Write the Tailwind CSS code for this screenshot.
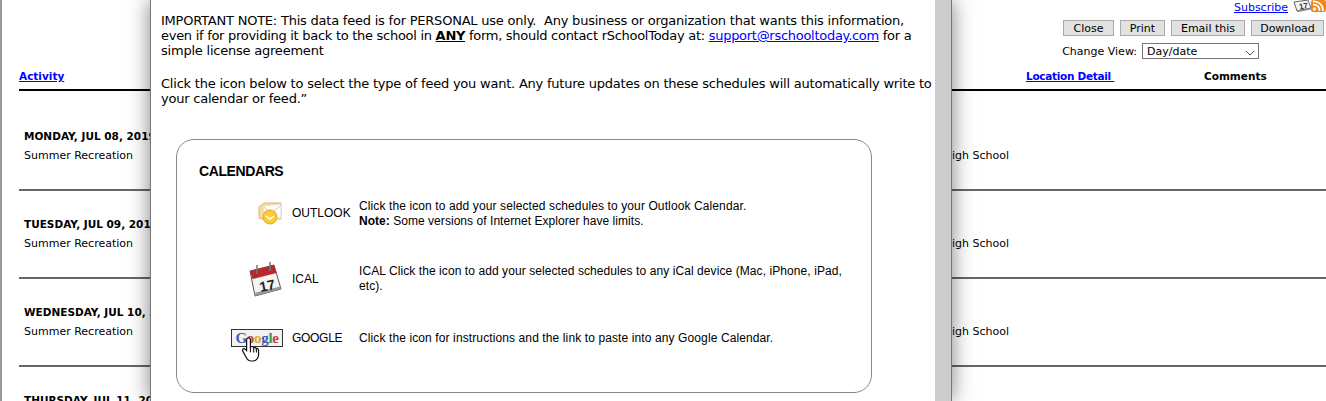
<!DOCTYPE html>
<html lang="en">
<head>
  <meta charset="UTF-8"/>
  <title>Schedule</title>
  <script src="https://cdn.jsdelivr.net/npm/@tailwindcss/browser@4"></script>
</head>
<body class="relative h-[401px] overflow-hidden bg-white font-['DejaVu_Sans',sans-serif] text-[11px] text-black">

  <!-- Page behind the popup -->
  <div class="h-[401px] border-l-2 border-[#999] pl-[17px]">
    <!-- Top right tools -->
    <div class="h-[20px] flex justify-end items-start">
      <a href="#" class="mt-[1px] text-[11px] leading-[14px] text-[#00f] underline">Subscribe</a>
      <svg class="ml-[5px]" width="19" height="12" viewBox="0 0 19 12">
        <path d="M1 2l14-2 3 8-14 3z" fill="#f2f2f2" stroke="#666"/>
        <path d="M4 11l14-3v1.500L5 12z" fill="#888"/>
        <text x="6" y="9" font-size="8" font-weight="700" fill="#333" font-family="Liberation Sans" transform="rotate(-8 9 6)">17</text>
      </svg>
      <svg class="ml-[-1px]" width="15" height="12" viewBox="0 0 15 12">
        <rect width="15" height="12" rx="2" fill="#f0851e"/>
        <circle cx="3.500" cy="9" r="1.700" fill="#fff"/>
        <path d="M2 4.800a5.500 5.500 0 0 1 6.500 6M2 1.500a9 9 0 0 1 10 9.500" fill="none" stroke="#fff" stroke-width="1.800"/>
      </svg>
    </div>
    <div class="flex justify-end gap-[6px] pr-[2px]">
      <button class="w-[51px] h-[16px] pt-[1px] bg-[#e1e1e1] border border-[#aaa] text-[11px] leading-[14px]">Close</button>
      <button class="w-[45px] h-[16px] pt-[1px] bg-[#e1e1e1] border border-[#aaa] text-[11px] leading-[14px]">Print</button>
      <button class="w-[74px] h-[16px] pt-[1px] bg-[#e1e1e1] border border-[#aaa] text-[11px] leading-[14px]">Email this</button>
      <button class="w-[73px] h-[16px] pt-[1px] bg-[#e1e1e1] border border-[#aaa] text-[11px] leading-[14px]">Download</button>
    </div>
    <div class="flex justify-end items-center mt-[7px] pr-[67px] h-[16px]">
      <span class="mr-[5px] pt-[2px] text-[11px]">Change View:</span>
      <div class="w-[117px] h-[16px] border border-[#777] flex items-center justify-between pl-[4px] pr-[3px] pt-[2px] text-[11px]">
        <span>Day/date</span>
        <svg width="10" height="6" viewBox="0 0 10 6" class="mt-[2px]"><path d="M1 1l4 4 4-4" fill="none" stroke="#555"/></svg>
      </div>
    </div>

    <!-- Table head -->
    <div class="flex h-[32px] pt-[10px] border-b-2 border-black font-bold text-[10.5px] leading-[14px]">
      <a href="#" class="w-[1007px] text-[#00f] underline">Activity</a>
      <a href="#" class="w-[178px] text-[#00f] underline tracking-[-0.3px]">Location Detail&nbsp;</a>
      <span>Comments</span>
    </div>

    <!-- Table rows -->
    <div class="h-[100px] border-b-2 border-[#666] pl-[5px] pt-[38px]">
      <div class="font-bold text-[10.5px] leading-[14px]">MONDAY, JUL 08, 2019</div>
      <div class="flex justify-between w-[985px] mt-[6px] leading-[14px]"><span>Summer Recreation</span><span>High School</span></div>
    </div>
    <div class="h-[88px] border-b-2 border-[#666] pl-[5px] pt-[26px]">
      <div class="font-bold text-[10.5px] leading-[14px]">TUESDAY, JUL 09, 2019</div>
      <div class="flex justify-between w-[985px] mt-[6px] leading-[14px]"><span>Summer Recreation</span><span>High School</span></div>
    </div>
    <div class="h-[88px] border-b-2 border-[#666] pl-[5px] pt-[26px]">
      <div class="font-bold text-[10.5px] leading-[14px]">WEDNESDAY, JUL 10, 2019</div>
      <div class="flex justify-between w-[985px] mt-[6px] leading-[14px]"><span>Summer Recreation</span><span>High School</span></div>
    </div>
    <div class="pl-[5px] pt-[26px] font-bold text-[10.5px] leading-[14px]">THURSDAY, JUL 11, 2019</div>
  </div>

  <!-- Popup -->
  <div class="absolute left-[150px] top-0 h-[401px] w-[802px] flex border-x border-[#777] bg-white shadow-[0_0_20px_rgba(0,0,0,0.5)]">
    <div class="w-[784px] shrink-0 pl-[10px] pt-[13px]">
      <p class="text-[13px] leading-[15px] tracking-[-0.22px] whitespace-nowrap">IMPORTANT NOTE: This data feed is for PERSONAL use only.&nbsp; Any business or organization that wants this information,<br/><span class="tracking-[-0.28px]">even if for providing it back to the school in <b class="underline">ANY</b> form, should contact rSchoolToday at: <a href="#" class="text-[#00f] underline">support@rschooltoday.com</a> for a</span><br/>simple license agreement</p>
      <p class="mt-[18px] text-[13px] leading-[15px] tracking-[-0.22px] whitespace-nowrap">Click the icon below to select the type of feed you want. Any future updates on these schedules will automatically write to<br/>your calendar or feed.”</p>

      <!-- Calendars box -->
      <div class="mt-[33px] ml-[15px] w-[696px] h-[254px] rounded-[18px] border border-[#888] pl-[22px] pt-[23px] font-['Liberation_Sans',sans-serif] text-[12px] leading-[15px]">
        <h2 class="text-[14px] leading-[16px] font-bold tracking-[-0.4px]">CALENDARS</h2>
        <div class="flex items-center mt-[20px] h-[30px]">
          <div class="w-[93px] pr-[10px] flex justify-end">
            <svg width="24" height="24" viewBox="0 0 24 24">
              <path d="M1 5l5-4h17v16H3l-2-1z" fill="#f8dc9c" stroke="#e8b654"/>
              <path d="M5 4l18-2v14H7z" fill="#fff" stroke="#ddd"/>
              <path d="M6 5l7 7 10-9" fill="none" stroke="#d9c58f"/>
              <circle cx="12" cy="15" r="7" fill="#f9cd35" stroke="#e4a61a"/>
              <path d="M8 14l4 3 4-3" fill="none" stroke="#fff" stroke-width="1.500"/>
            </svg>
          </div>
          <div class="w-[67px] -mt-[2px]">OUTLOOK</div>
          <div class="tracking-[0.11px]">Click the icon to add your selected schedules to your Outlook Calendar.<br/><b class="tracking-normal">Note:</b> <span class="tracking-[0.05px]">Some versions of Internet Explorer have limits.</span></div>
        </div>
        <div class="flex items-center mt-[35px] h-[30px]">
          <div class="w-[93px] pr-[10px] flex justify-end">
            <svg width="33" height="35" viewBox="0 0 33 35">
              <path d="M1 9l24-6 7 24-26 7z" fill="#f4f4f4" stroke="#555"/>
              <path d="M6 34l26-7-.8-2.500L5 31z" fill="#999"/>
              <path d="M1 9l24-6 2.500 8-24 6z" fill="#b5292c"/>
              <path d="M8 3v9M21 0v9" stroke="#777" stroke-width="1.500"/>
              <text x="10" y="29" font-size="14" font-weight="700" fill="#222" font-family="Liberation Sans" transform="rotate(-12 16 22)">17</text>
            </svg>
          </div>
          <div class="w-[67px]">ICAL</div>
          <div class="w-[490px] tracking-[0.08px]">ICAL Click the icon to add your selected schedules to any iCal device (Mac, iPhone, iPad, etc).</div>
        </div>
        <div class="flex items-center mt-[37px] h-[15px]">
          <div class="w-[93px] pr-[9px] flex justify-end">
            <div class="relative -mt-[1px] w-[52px] h-[18px] border border-[#333] bg-[#f2f2f2] flex items-center justify-center font-['Liberation_Serif',serif] font-bold text-[15px] leading-[15px] tracking-[-0.3px]">
              <span><span class="text-[#3b5bb5]">G</span><span class="text-[#c8402f]">o</span><span class="text-[#d9a72a]">o</span><span class="text-[#3b5bb5]">g</span><span class="text-[#3f9a3f]">l</span><span class="text-[#c8402f]">e</span></span>
              <svg class="absolute left-[9px] top-[7px]" width="21" height="25" viewBox="0 0 19 23">
                <path d="M6 1c1.200-.6 2.500 .2 2.500 1.500V9l1-.2c1-.2 1.800.2 2 1 1-.5 2-.1 2.200.8 1-.3 2.300.3 2.300 1.500v4c0 3-2 6-5 6H9c-2.500 0-3.500-1.500-4.500-3.500L1.500 13c-.8-1.500.8-3 2.200-1.800L5 12.500V2.500c0-.6.400-1.200 1-1.500z" fill="#fff" stroke="#111" stroke-width="1.100"/>
                <path d="M8.500 9v5M11.500 9.800v4.500M14 10.800v3.500" stroke="#111" fill="none"/>
              </svg>
            </div>
          </div>
          <div class="w-[67px] tracking-[-0.3px]">GOOGLE</div>
          <div class="tracking-[0.11px]">Click the icon for instructions and the link to paste into any Google Calendar.</div>
        </div>
      </div>
    </div>
    <!-- Scrollbar -->
    <div class="w-[16px] bg-[#cdcdcd]"></div>
  </div>
</body>
</html>
